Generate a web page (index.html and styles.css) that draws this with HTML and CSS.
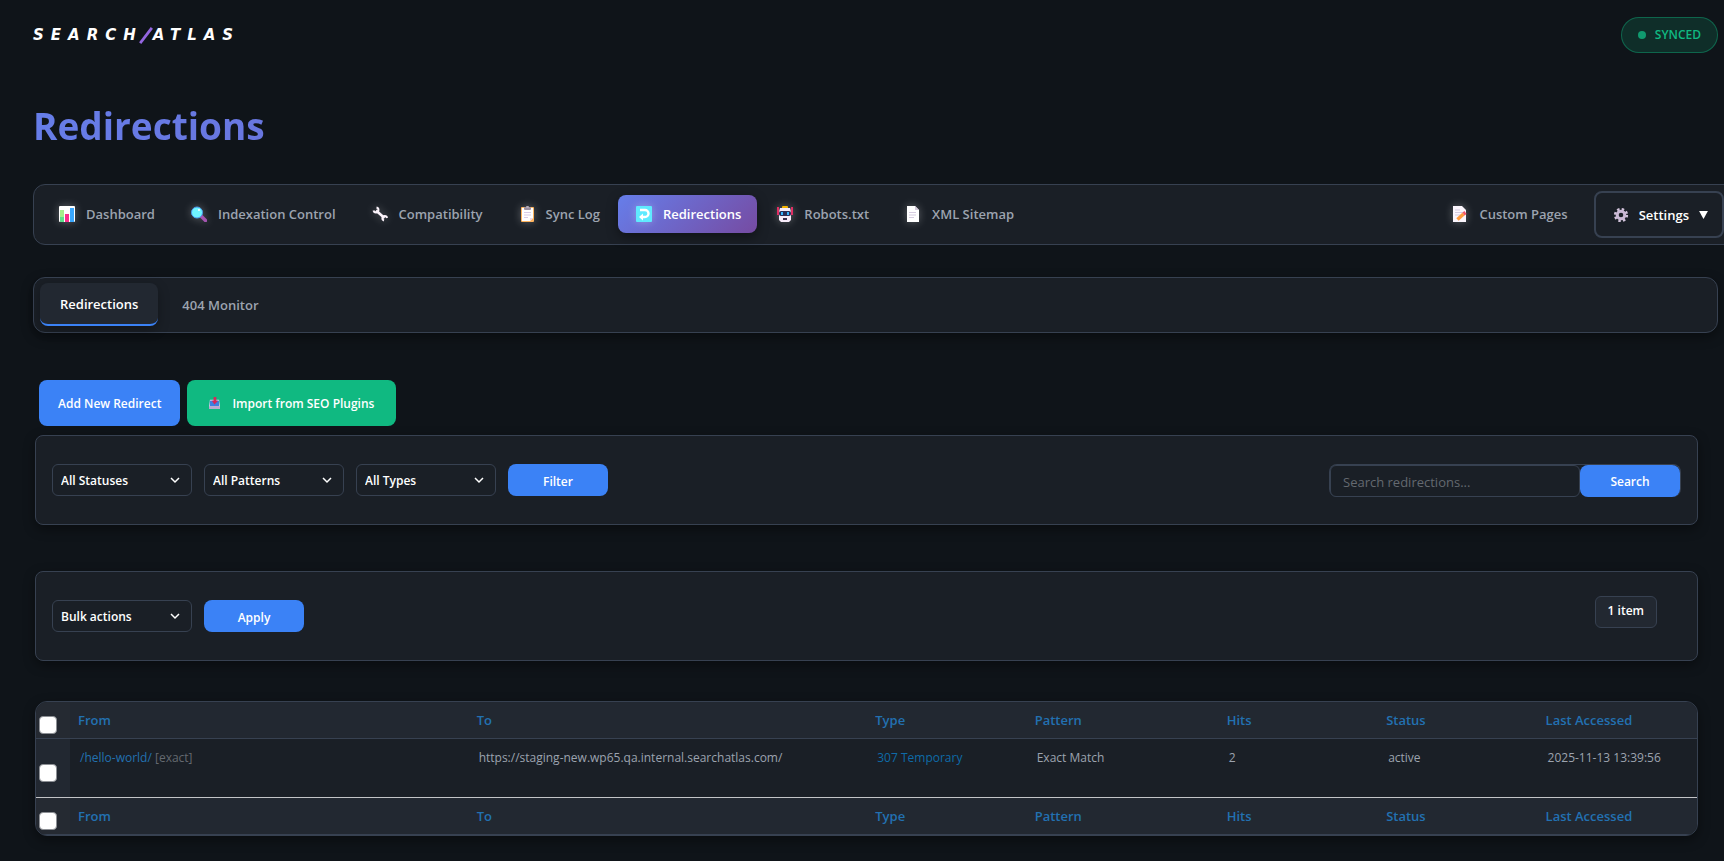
FILE: index.html
```html
<!DOCTYPE html>
<html lang="en">
<head>
  <meta charset="UTF-8">
  <meta name="viewport" content="width=device-width, initial-scale=1.0">
  <title>Redirections - Search Atlas</title>
  <link rel="stylesheet" href="styles.css">
</head>
<body>
  <header class="header">
    <a href="#" class="logo">SEARCH<svg class="logo-slash" viewBox="0 0 14 17"><path d="M2 15L12 2" stroke="#9466e0" stroke-width="2.800" stroke-linecap="square"/></svg>ATLAS</a>
    <div class="status"><span class="status-dot"></span>SYNCED</div>
  </header>

  <h1>Redirections</h1>

  <nav class="nav">
    <a href="#" class="nav-item">
      <svg class="icon glow" viewBox="0 0 16 16"><rect width="16" height="16" rx="1" fill="#fff"/><rect x="1" y="4" width="4" height="12" fill="#a5f08a"/><rect x="1" y="11" width="4" height="5" fill="#5fe08c"/><rect x="6" y="8" width="4" height="8" fill="#f92f8b"/><rect x="11" y="2" width="4" height="14" fill="#3aa8ff"/></svg>
      Dashboard
    </a>
    <a href="#" class="nav-item">
      <svg class="icon glow" viewBox="0 0 16 16"><path d="M10 10l4.500 4.500" stroke="#a455b0" stroke-width="3.500" stroke-linecap="round"/><circle cx="6" cy="6.500" r="5.500" fill="#6ff4ff" stroke="#4a9df0"/><circle cx="8" cy="4" r="1" fill="#fff"/></svg>
      Indexation Control
    </a>
    <a href="#" class="nav-item">
      <svg class="icon glow" viewBox="0 0 16 16"><path d="M4 4.500l8.500 7.500" stroke="#fbf3fb" stroke-width="2.600"/><path d="M1.500 4.500A2.500 2.500 0 1 0 4.500 1.500M15 12A2.300 2.300 0 1 0 12 14.500" fill="none" stroke="#fbf3fb" stroke-width="2"/></svg>
      Compatibility
    </a>
    <a href="#" class="nav-item">
      <svg class="icon glow" viewBox="0 0 16 16"><rect x="2" y="1" width="13" height="15" rx="1" fill="#ffb45e"/><path d="M3 2h11v10l-3 3H3z" fill="#fff"/><path d="M5 6.500h7M5 9h7M5 11.500h4" stroke="#d9cbe6"/><path d="M11 15v-3h3z" fill="#f0d9e8"/><rect x="5" y="1" width="7" height="3" rx="1" fill="#9a8f9f"/><rect x="7" width="3" height="2" rx="1" fill="#b5abb8"/></svg>
      Sync Log
    </a>
    <a href="#" class="nav-item active">
      <svg class="icon glow" viewBox="0 0 16 16"><rect width="16" height="16" rx="1" fill="#5feaff"/><path d="M4 4h5a3.500 3.500 0 0 1 0 7H6" fill="none" stroke="#fff" stroke-width="2.400"/><path d="M7 7.500v7L3 11z" fill="#fff"/></svg>
      Redirections
    </a>
    <a href="#" class="nav-item">
      <svg class="icon glow" viewBox="0 0 16 16"><path d="M1 1v8M15 1v8" stroke="#e02f63" stroke-width="2"/><rect x="5" width="6" height="3" rx="1" fill="#f5b400"/><path d="M3 2h10l1 4v8l-2 2H4l-2-2V6z" fill="#f8ecfa"/><rect x="2" y="5" width="12" height="5" rx="2" fill="#2a2c55"/><rect x="4" y="6" width="2" height="3" fill="#36b4ff"/><rect x="10" y="6" width="2" height="3" fill="#36b4ff"/><rect x="6" y="12" width="4" height="2" fill="#3b2f4d"/></svg>
      Robots.txt
    </a>
    <a href="#" class="nav-item">
      <svg class="icon glow" viewBox="0 0 16 16"><path d="M2 0h8l4 4v12H2z" fill="#fff"/><path d="M10 0l4 4h-4z" fill="#d5cbdc"/><path d="M4 6.500h7M4 9h7M4 11.500h5" stroke="#d5cbe0"/></svg>
      XML Sitemap
    </a>
    <a href="#" class="nav-item nav-right">
      <svg class="icon glow" viewBox="0 0 16 16"><path d="M1 0h9l4 4v12H1z" fill="#fbf6fd"/><path d="M3 6.500h8M3 9h5M3 4h5" stroke="#d5cbe0"/><path d="M5.500 13.500l6-5.500" stroke="#ff9b3f" stroke-width="3.500"/><path d="M11.500 8l2-1.500" stroke="#f4566a" stroke-width="3.500"/></svg>
      Custom Pages
    </a>
    <button type="button" class="settings">
      <svg class="icon" viewBox="0 0 16 16"><circle cx="8" cy="8" r="5.800" fill="none" stroke="#d3c4dc" stroke-width="2.600" stroke-dasharray="2.400 2.155"/><circle cx="8" cy="8" r="3.800" fill="none" stroke="#c9b8d4" stroke-width="3"/></svg>
      Settings
      <svg class="caret" viewBox="0 0 10 9"><path d="M0 0h10L5 9z" fill="#fff"/></svg>
    </button>
  </nav>

  <div class="tabs">
    <a href="#" class="tab active">Redirections</a>
    <a href="#" class="tab">404 Monitor</a>
  </div>

  <main class="content">
    <div class="actions">
      <button type="button" class="btn btn-large">Add New Redirect</button>
      <button type="button" class="btn btn-large btn-green">
        <svg class="icon-small" viewBox="0 0 12 14"><path d="M1 3h10l1 7v3H0v-3z" fill="#d9d3ea"/><path d="M1 4h10v6H1z" fill="#3d7fe0"/><path d="M0 10h12v3H0z" fill="#b9a9cf"/><path d="M5 0h3v4h2L6 8 3 4h2z" fill="#d6265a"/></svg>
        Import from SEO Plugins
      </button>
    </div>

    <form class="card">
      <div class="select">
        <select aria-label="Filter by status"><option>All Statuses</option></select>
        <svg viewBox="0 0 10 7"><path d="M1 1l4 4 4-4"/></svg>
      </div>
      <div class="select">
        <select aria-label="Filter by pattern"><option>All Patterns</option></select>
        <svg viewBox="0 0 10 7"><path d="M1 1l4 4 4-4"/></svg>
      </div>
      <div class="select">
        <select aria-label="Filter by type"><option>All Types</option></select>
        <svg viewBox="0 0 10 7"><path d="M1 1l4 4 4-4"/></svg>
      </div>
      <button type="button" class="btn">Filter</button>
      <div class="search">
        <input type="text" placeholder="Search redirections..." aria-label="Search redirections">
        <button type="button" class="btn">Search</button>
      </div>
    </form>

    <div class="card">
      <div class="select">
        <select aria-label="Bulk actions"><option>Bulk actions</option></select>
        <svg viewBox="0 0 10 7"><path d="M1 1l4 4 4-4"/></svg>
      </div>
      <button type="button" class="btn">Apply</button>
      <span class="count">1 item</span>
    </div>

    <div class="table-wrap">
      <table>
        <colgroup>
          <col class="col-check">
          <col class="col-url">
          <col class="col-url">
          <col>
          <col class="col-pattern">
          <col>
          <col>
          <col>
        </colgroup>
        <thead>
          <tr>
            <th><input type="checkbox" aria-label="Select all"></th>
            <th><a href="#">From</a></th>
            <th><a href="#">To</a></th>
            <th><a href="#">Type</a></th>
            <th><a href="#">Pattern</a></th>
            <th><a href="#">Hits</a></th>
            <th><a href="#">Status</a></th>
            <th><a href="#">Last Accessed</a></th>
          </tr>
        </thead>
        <tbody>
          <tr>
            <th><input type="checkbox" aria-label="Select /hello-world/"></th>
            <td><a href="#">/hello-world/</a> <small>[exact]</small></td>
            <td>https://staging-new.wp65.qa.internal.searchatlas.com/</td>
            <td class="type">307 Temporary</td>
            <td>Exact Match</td>
            <td>2</td>
            <td>active</td>
            <td>2025-11-13 13:39:56</td>
          </tr>
        </tbody>
        <tfoot>
          <tr>
            <th><input type="checkbox" aria-label="Select all"></th>
            <th><a href="#">From</a></th>
            <th><a href="#">To</a></th>
            <th><a href="#">Type</a></th>
            <th><a href="#">Pattern</a></th>
            <th><a href="#">Hits</a></th>
            <th><a href="#">Status</a></th>
            <th><a href="#">Last Accessed</a></th>
          </tr>
        </tfoot>
      </table>
    </div>
  </main>
</body>
</html>
```
FILE: styles.css
```css
* {
  box-sizing: border-box;
}

body {
  margin: 0;
  padding: 17px 6px 25px 33px;
  overflow-x: hidden;
  background-color: #0f1419;
  color: #9ca3af;
  font-family: 'Segoe UI', 'Open Sans', 'Noto Sans', sans-serif;
  font-size: 13px;
  line-height: 20px;
}

a {
  color: #2271b1;
  text-decoration: none;
}

button,
input,
select {
  font-family: inherit;
  font-size: 12px;
}

.header {
  display: flex;
  align-items: center;
  justify-content: space-between;
  height: 36px;
}

.logo {
  display: flex;
  align-items: center;
  color: #fff;
  font-family: 'DejaVu Sans', sans-serif;
  font-size: 15px;
  font-weight: bold;
  font-style: italic;
  letter-spacing: 7px;
}

.logo-slash {
  width: 14px;
  height: 17px;
  margin-left: -4px;
}

.status {
  display: flex;
  align-items: center;
  gap: 9px;
  height: 36px;
  padding: 0 16px;
  border: 1px solid rgba(16, 185, 129, 0.4);
  border-radius: 18px;
  background-color: rgba(16, 185, 129, 0.16);
  color: #10b981;
  font-size: 12px;
  font-weight: 600;
}

.status-dot {
  width: 8px;
  height: 8px;
  border-radius: 50%;
  background-color: #109a6f;
}

h1 {
  margin: 45px 0 31px;
  background: linear-gradient(135deg, #667eea, #764ba2);
  background-clip: text;
  color: transparent;
  font-size: 37px;
  font-weight: 700;
  line-height: 55px;
}

.nav {
  display: flex;
  align-items: center;
  gap: 2px;
  height: 61px;
  margin-right: -18px;
  padding: 0 11px 0 7px;
  border: 1px solid #374151;
  border-radius: 12px;
  background-color: #1a1f26;
}

.nav-item {
  display: flex;
  align-items: center;
  gap: 11px;
  height: 38px;
  margin-bottom: 2px;
  padding: 0 16px 0 18px;
  border-radius: 8px;
  color: #9ca3af;
  font-weight: 600;
  white-space: nowrap;
}

.nav-item.active {
  background: linear-gradient(135deg, #667eea, #764ba2);
  box-shadow: 0 4px 12px rgba(0, 0, 0, 0.4);
  color: #fff;
}

.nav-right {
  margin-left: auto;
}

.icon {
  width: 16px;
  height: 16px;
}

.glow {
  filter: drop-shadow(0 0 4px rgba(255, 255, 255, 0.3));
}

.settings {
  display: flex;
  align-items: center;
  gap: 10px;
  height: 47px;
  margin-left: 8px;
  padding: 0 14px 0 17px;
  border: 2px solid #374151;
  border-radius: 8px;
  background-color: #1a1f26;
  color: #fff;
  font-size: 13px;
  font-weight: 600;
}

.caret {
  width: 9px;
  height: 8px;
}

.tabs {
  display: flex;
  gap: 4px;
  margin-top: 32px;
  padding: 5px 6px 6px;
  border: 1px solid #374151;
  border-radius: 12px;
  background-color: #1a1f26;
  box-shadow: 0 4px 12px rgba(0, 0, 0, 0.4);
}

.tab {
  height: 43px;
  padding: 12px 20px;
  border-radius: 8px;
  color: #9ca3af;
  font-weight: 600;
}

.tab.active {
  padding-top: 11px;
  border-bottom: 2px solid #3b82f6;
  background-color: #222831;
  box-shadow: 0 4px 12px rgba(0, 0, 0, 0.3);
  color: #fff;
}

.content {
  margin: 47px 20px 0 2px;
}

.actions {
  display: flex;
  gap: 7px;
  padding-left: 4px;
}

.btn {
  min-width: 100px;
  height: 32px;
  padding: 2px 16px 0;
  border: none;
  border-radius: 8px;
  background-color: #3b82f6;
  color: #fff;
  font-weight: 600;
  cursor: pointer;
}

.btn-large {
  display: flex;
  align-items: center;
  gap: 12px;
  height: 46px;
  padding: 0 19px;
}

.btn-green {
  padding: 0 22px;
  background-color: #10b981;
}

.icon-small {
  width: 11px;
  height: 13px;
}

.card {
  display: flex;
  align-items: center;
  gap: 12px;
  height: 90px;
  margin-top: 9px;
  padding: 0 16px;
  border: 1px solid #374151;
  border-radius: 8px;
  background-color: #1a1f26;
  box-shadow: 0 4px 12px rgba(0, 0, 0, 0.4);
}

.card + .card {
  margin-top: 46px;
}

.select {
  position: relative;
  width: 140px;
}

.select select {
  width: 100%;
  height: 32px;
  padding: 0 28px 0 8px;
  border: 1px solid #374151;
  border-radius: 6px;
  background-color: #1a1f26;
  color: #fff;
  font-weight: 600;
  appearance: none;
}

.select svg {
  position: absolute;
  top: 13px;
  right: 12px;
  width: 10px;
  height: 7px;
  fill: none;
  stroke: #fff;
  stroke-width: 1.5;
  pointer-events: none;
}

.search {
  display: flex;
  margin-left: auto;
  border: 1px solid #374151;
  border-bottom: none;
  border-radius: 8px;
}

.search input {
  width: 250px;
  height: 32px;
  padding: 2px 12px 0;
  border: 1px solid #374151;
  border-radius: 6px;
  background-color: #1a1f26;
  color: #fff;
  font-size: 13px;
}

.search input::placeholder {
  color: #646970;
}

.count {
  height: 32px;
  margin: 0 24px 8px auto;
  padding: 4px 12px;
  border: 1px solid #374151;
  border-radius: 6px;
  background-color: #222831;
  color: #fff;
  font-size: 12px;
  font-weight: 600;
}

.table-wrap {
  margin-top: 40px;
  border: 1px solid #374151;
  border-radius: 12px;
  background-color: #1a1f26;
  box-shadow: 0 4px 12px rgba(0, 0, 0, 0.4);
  overflow: hidden;
}

table {
  width: 100%;
  border-collapse: collapse;
  table-layout: fixed;
}

.col-check {
  width: 34px;
}

.col-url {
  width: 24%;
}

.col-pattern {
  width: 192px;
}

th {
  height: 36px;
  padding: 8px;
  background-color: #222831;
  font-weight: 600;
  text-align: left;
  vertical-align: top;
}

th:first-child {
  padding: 14px 0 0 3px;
  background-color: #252a32;
  line-height: 0;
}

thead th,
tfoot th {
  border-bottom: 1px solid #374151;
}

td {
  height: 59px;
  padding: 9px 10px;
  font-size: 12px;
  vertical-align: top;
}

tbody th:first-child {
  padding-top: 25px;
  background-color: #222831;
}

tbody tr {
  border-bottom: 1px solid #c3c4c7;
}

small {
  color: #646970;
  font-size: 12px;
}

.type {
  color: #0e6ba8;
}

input[type="checkbox"] {
  width: 18px;
  height: 18px;
  margin: 0;
  border: 1px solid #8c8f94;
  border-radius: 4px;
  background-color: #fff;
  appearance: none;
}
```
